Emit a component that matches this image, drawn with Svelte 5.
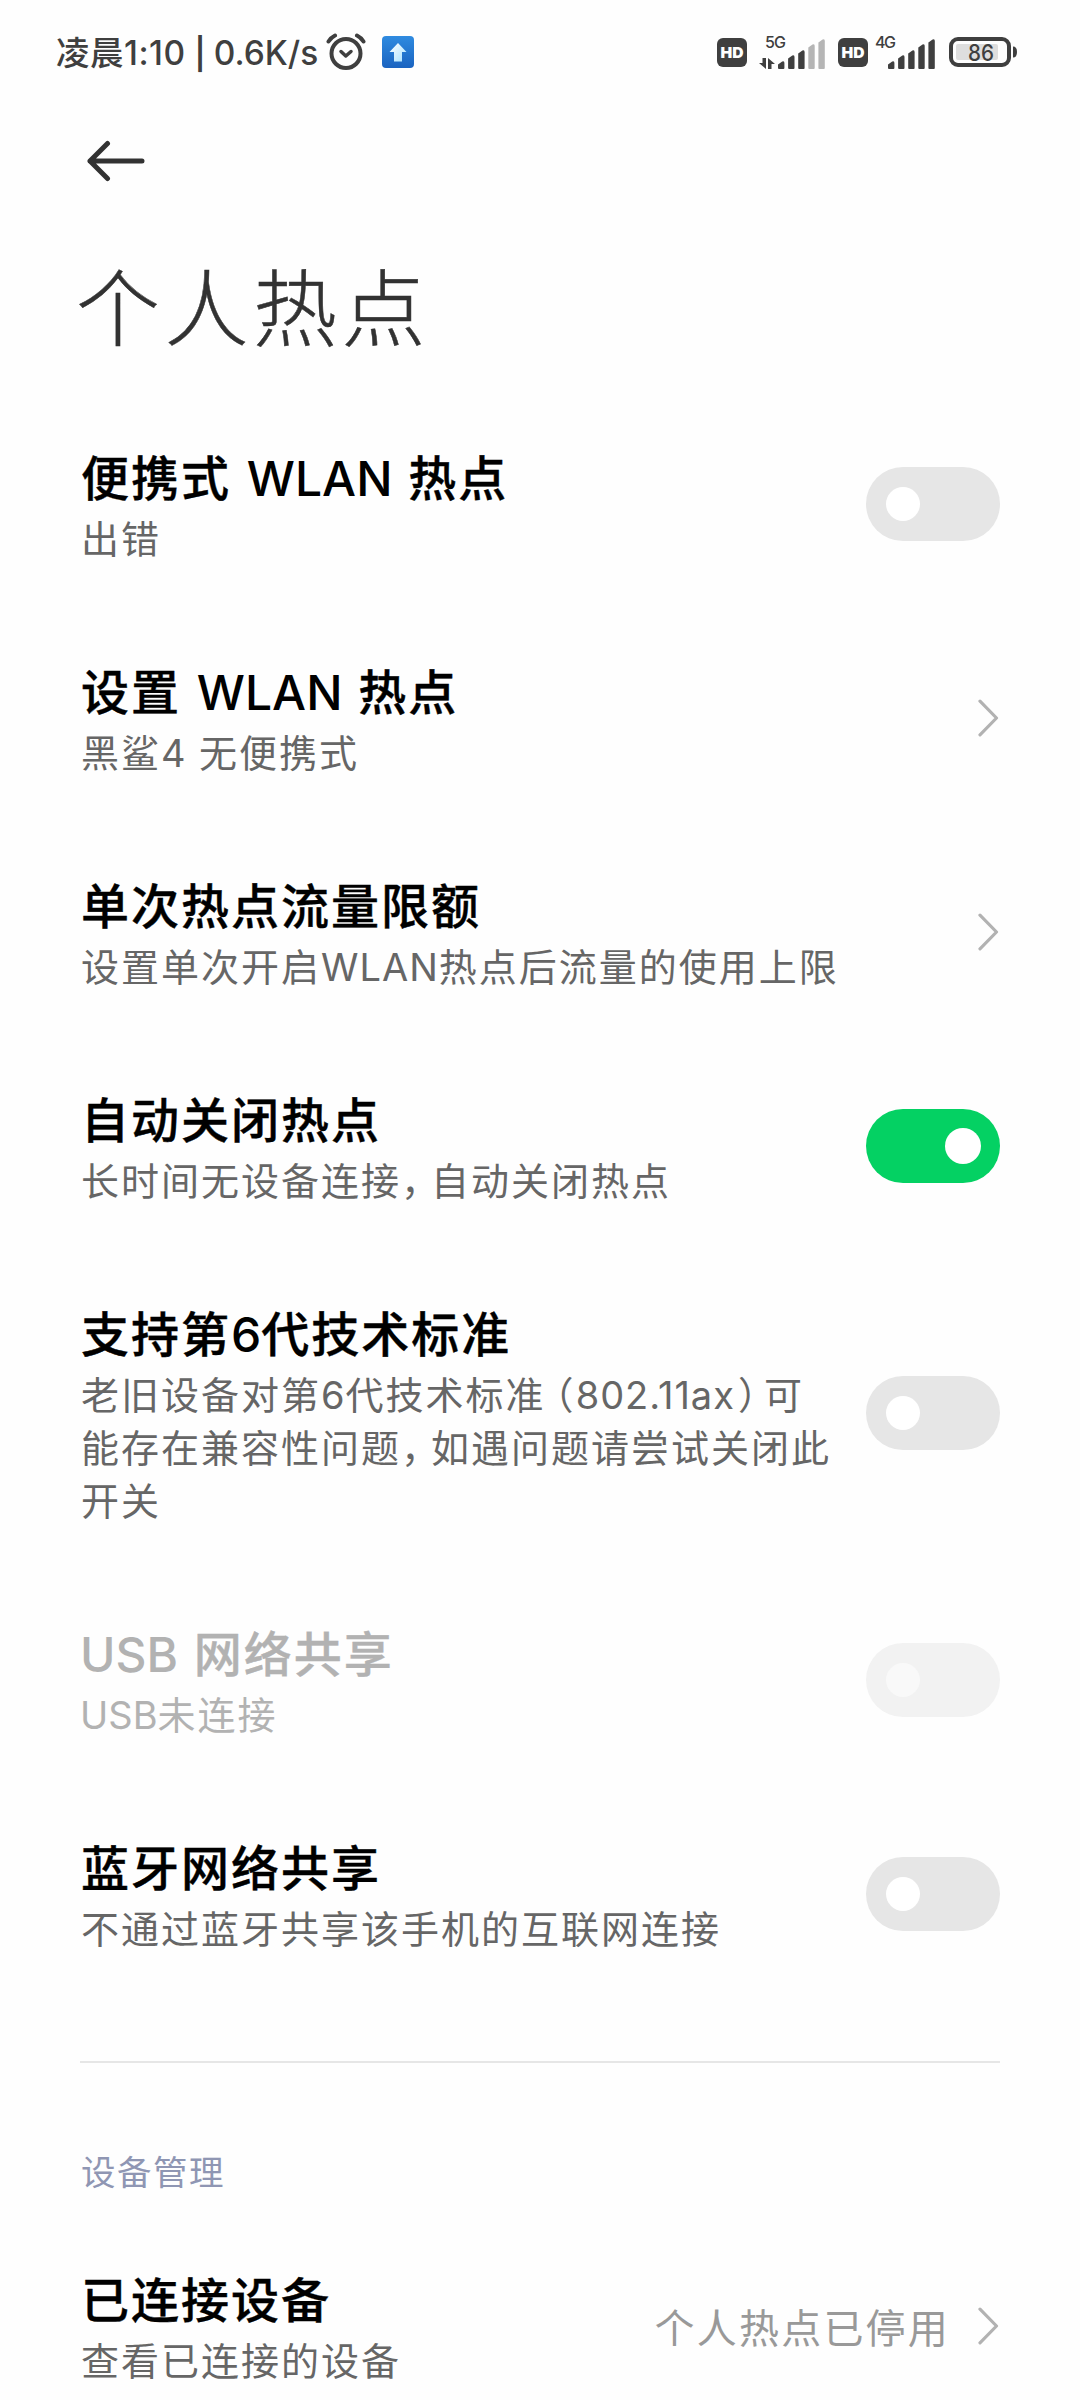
<script>
  let items = $state([
    { title: '便携式 WLAN 热点', lines: ['出错'], type: 'toggle', on: false },
    { title: '设置 WLAN 热点', lines: ['黑鲨4 无便携式'], type: 'link' },
    { title: '单次热点流量限额', lines: ['设置单次开启WLAN热点后流量的使用上限'], type: 'link' },
    { title: '自动关闭热点', lines: ['长时间无设备连接，自动关闭热点'], type: 'toggle', on: true },
    {
      title: '支持第6代技术标准',
      lines: ['老旧设备对第6代技术标准（802.11ax）可', '能存在兼容性问题，如遇问题请尝试关闭此', '开关'],
      type: 'toggle',
      on: false
    },
    { title: 'USB 网络共享', lines: ['USB未连接'], type: 'toggle', on: false, disabled: true },
    { title: '蓝牙网络共享', lines: ['不通过蓝牙共享该手机的互联网连接'], type: 'toggle', on: false }
  ]);

  const devices = { title: '已连接设备', lines: ['查看已连接的设备'], type: 'link', value: '个人热点已停用' };

  // split so that latin runs get their own metrics
  function parts(text) {
    return text.split(/([A-Za-z0-9.]+|[，（）])/).filter(Boolean);
  }

  function kind(part) {
    if (/^[A-Za-z0-9.]+$/.test(part)) return 'latin';
    if (part === '，') return 'half comma';
    if (part === '（') return 'half open';
    if (part === '）') return 'half close';
    return 'han';
  }

  function toggle(item) {
    if (!item.disabled) item.on = !item.on;
  }
</script>

{#snippet rich(text)}{#each parts(text) as part}<span class={kind(part)}>{part}</span>{/each}{/snippet}

{#snippet hd()}
  <svg class="hd" width="30" height="29" viewBox="0 0 30 29">
    <rect width="30" height="29" rx="6" fill="#3f3f3f" />
    <text x="15" y="20" text-anchor="middle" textLength="23" lengthAdjust="spacingAndGlyphs">HD</text>
  </svg>
{/snippet}

{#snippet signal(level)}
  {#each [8, 14, 19, 25, 30] as h, i}
    <path
      d="M{19 + i * 10.1} {34 - h + 3.5}l4.2-3q2.2-1 2.2 1.4V33q0 1-1 1h-4.4q-1 0-1-1z"
      fill={i < level ? '#3f3f3f' : '#b5b5b5'}
    />
  {/each}
{/snippet}

{#snippet row(item)}
  <div class="row" class:disabled={item.disabled}>
    <div class="text">
      <div class="title">{@render rich(item.title)}</div>
      {#each item.lines as line}
        <div class="summary">{@render rich(line)}</div>
      {/each}
    </div>
    {#if item.value}
      <span class="value">{item.value}</span>
    {/if}
    {#if item.type === 'toggle'}
      <button class="switch" class:on={item.on} aria-label={item.title} onclick={() => toggle(item)}>
        <span class="knob"></span>
      </button>
    {:else}
      <svg class="chevron" width="22" height="40" viewBox="0 0 22 40">
        <path d="M2 3.2 18.5 20 2 36.8" />
      </svg>
    {/if}
  </div>
{/snippet}

<div class="page">
  <header class="status">
    <div class="left">
      <span class="clock"><span class="zh">凌晨</span><span class="time">1:10</span><span class="bar">|</span>0.6K/s</span>
      <svg class="alarm" width="40" height="38" viewBox="0 0 40 38">
        <g fill="none" stroke="#3f3f3f" stroke-linecap="round" stroke-linejoin="round">
          <circle cx="20" cy="20.5" r="14.5" stroke-width="4" />
          <path d="M2.5 8.5Q5 4.5 9 2.5M31 2.5q4 2 6.5 6" stroke-width="4" />
          <path d="M15 18.5l4.8 4.5 5.2-4.5" stroke-width="3.5" />
        </g>
      </svg>
      <svg class="upload" width="32" height="32" viewBox="0 0 32 32">
        <defs>
          <linearGradient id="blue" x1="0" y1="0" x2="0" y2="1">
            <stop offset="0" stop-color="#2f8be0" />
            <stop offset="1" stop-color="#1a63c0" />
          </linearGradient>
          <linearGradient id="ice" x1="0" y1="0" x2="1" y2="1">
            <stop offset="0" stop-color="#ffffff" />
            <stop offset="1" stop-color="#a9e2ff" />
          </linearGradient>
        </defs>
        <rect width="32" height="32" rx="4" fill="url(#blue)" />
        <path d="M16 7 24.5 16H20v9.5h-8V16H7.5z" fill="url(#ice)" />
      </svg>
    </div>
    <div class="right">
      {@render hd()}
      <svg class="net five" width="67" height="51" viewBox="0 -8 67 51">
        <text x="6" y="13" textLength="21">5G</text>
        <path d="M3.5 23H7v11L0 28h3.500zM9 34V23l7 6h-3.500v5z" fill="#3f3f3f" />
        {@render signal(3)}
      </svg>
      {@render hd()}
      <svg class="net four" width="67" height="51" viewBox="0 -8 67 51">
        <text x="6" y="13" textLength="21">4G</text>
        {@render signal(5)}
      </svg>
      <svg class="battery" width="68" height="42" viewBox="0 -6 68 42">
        <rect x="2" y="2" width="58" height="26" rx="7" fill="none" stroke="#3f3f3f" stroke-width="4" />
        <rect x="7" y="7" width="42" height="16" rx="2" fill="#dedede" />
        <path d="M64 9.5q4 0 4 5.5t-4 5.5z" fill="#3f3f3f" />
        <text x="32" y="23.5" text-anchor="middle" textLength="26" lengthAdjust="spacingAndGlyphs">86</text>
      </svg>
    </div>
  </header>

  <nav class="nav">
    <svg width="60" height="42" viewBox="0 0 60 42">
      <path d="M21.5 3.5 4 21l17.5 17.5M4 21h52" />
    </svg>
  </nav>

  <h1>个人热点</h1>

  <main class="list">
    {#each items as item}
      {@render row(item)}
    {/each}
  </main>

  <hr />
  <h2>设备管理</h2>
  {@render row(devices)}
</div>

<style>
  :global(body) {
    background: #fefefe;
    overflow: hidden;
  }

  .page {
    box-sizing: border-box;
    width: 1080px;
    height: 2400px;
    overflow: hidden;
    background: #fefefe;
    color: #000;
    font-family: 'Noto Sans CJK SC', sans-serif;
  }

  .status {
    display: flex;
    justify-content: space-between;
    box-sizing: border-box;
    height: 104px;
    padding: 0 63px 0 56px;
    color: #3f3f3f;
  }

  .left,
  .right {
    display: flex;
    height: 104px;
    align-items: center;
  }

  .clock {
    width: 270px;
    padding-top: 2px;
    white-space: nowrap;
    font: 500 33.5px/50px 'Inter', 'Noto Sans CJK SC', sans-serif;
  }

  .zh {
    letter-spacing: 0.5px;
  }

  .time {
    letter-spacing: 0.5px;
  }

  .bar {
    margin: 0 8px 0 9px;
    font-size: 31px;
    font-weight: 600;
  }

  .upload {
    margin-left: 16px;
  }

  .hd text {
    fill: #fff;
    font: 900 15px 'Inter', sans-serif;
  }

  .net text {
    fill: #3f3f3f;
    font: 500 16px 'Inter', sans-serif;
  }

  .five {
    margin: 0 12px 0 12px;
  }

  .four {
    margin: 0 13px 0 1px;
  }

  .battery text {
    fill: #3f3f3f;
    font: 500 23px 'Inter', sans-serif;
  }

  .nav {
    display: flex;
    height: 113px;
    align-items: center;
    padding-left: 86px;
  }

  .nav path {
    fill: none;
    stroke: #323232;
    stroke-width: 5;
    stroke-linecap: round;
    stroke-linejoin: round;
  }

  h1 {
    margin: 0;
    height: 180px;
    padding-left: 76px;
    color: #323232;
    font-size: 84px;
    font-weight: 300;
    line-height: 174px;
    letter-spacing: 4.5px;
    -webkit-text-stroke: 0.5px #323232;
  }

  .row {
    display: flex;
    align-items: center;
    box-sizing: border-box;
    min-height: 214px;
    padding: 0 80px 0 81px;
  }

  .text {
    flex: 1;
    padding: 45px 0 48px;
    white-space: nowrap;
  }

  .title {
    height: 68px;
    font-size: 48px;
    font-weight: 500;
    line-height: 66px;
    letter-spacing: 2px;
    word-spacing: 3px;
    -webkit-text-stroke: 0.4px;
  }

  .summary {
    height: 53px;
    color: #666;
    font-size: 38px;
    line-height: 53px;
    letter-spacing: 2px;
    word-spacing: 2px;
  }

  .latin {
    font-family: 'Inter', sans-serif;
    line-height: 1;
    letter-spacing: 1px;
  }

  .title .latin {
    letter-spacing: 0;
    -webkit-text-stroke: 0;
  }

  .half {
    font-feature-settings: 'halt';
  }

  .comma {
    margin: 0 9px 0 0;
  }

  .open {
    margin-left: 9px;
  }

  .close {
    margin: 0 5px 0 3px;
  }

  .disabled .title,
  .disabled .summary {
    color: #b2b2b2;
  }

  .disabled .latin {
    margin-left: -1px;
    letter-spacing: 0;
  }

  .value {
    margin-right: 28px;
    color: #999;
    font-size: 40px;
    letter-spacing: 2.2px;
  }

  .switch {
    display: flex;
    align-items: center;
    box-sizing: border-box;
    width: 134px;
    height: 74px;
    padding: 0 20px;
    border: 0;
    border-radius: 37px;
    background: #e6e6e6;
  }

  .switch.on {
    justify-content: flex-end;
    padding: 0 19px;
    background: #04d163;
  }

  .knob {
    width: 34px;
    height: 34px;
    border-radius: 50%;
    background: #fff;
  }

  .on .knob {
    width: 36px;
    height: 36px;
  }

  .disabled .switch {
    background: #f2f2f2;
  }

  .disabled .knob {
    background: #f9f9f9;
  }

  .chevron path {
    fill: none;
    stroke: #b2b2b2;
    stroke-width: 3.2;
    stroke-linecap: round;
    stroke-linejoin: round;
  }

  hr {
    height: 2px;
    margin: 60px 80px 0;
    border: 0;
    background: #e6e6e6;
  }

  h2 {
    margin: 0;
    height: 156px;
    padding-left: 81px;
    color: #8f96b3;
    font-size: 34.5px;
    font-weight: 400;
    line-height: 214px;
    letter-spacing: 1.5px;
  }
</style>
